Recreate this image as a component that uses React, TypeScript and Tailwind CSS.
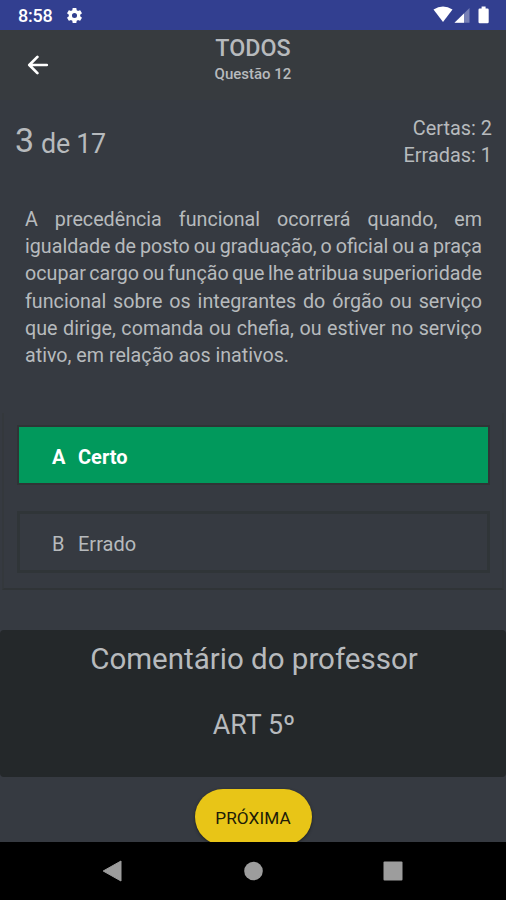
import type { ReactNode } from "react";

const QUESTION_LINES = [
  { text: "A precedência funcional ocorrerá quando, em", spacing: "" },
  { text: "igualdade de posto ou graduação, o oficial ou a praça", spacing: "[word-spacing:-1.2px]" },
  { text: "ocupar cargo ou função que lhe atribua superioridade", spacing: "[word-spacing:-1.7px]" },
  { text: "funcional sobre os integrantes do órgão ou serviço", spacing: "" },
  { text: "que dirige, comanda ou chefia, ou estiver no serviço", spacing: "" },
];

function StatusBar() {
  return (
    <div className="flex h-[30px] shrink-0 items-center justify-between bg-[#323f90] pl-[18px] pr-[15px] text-white">
      <div className="flex items-center gap-[11px]">
        <span className="w-[36px] whitespace-nowrap text-[18px] font-medium leading-[30px] tracking-[-0.2px] pt-[2px]">8:58</span>
        <svg width="19" height="19" viewBox="0 0 24 24" fill="currentColor">
          <path d="M19.14 12.94c.04-.3.06-.61.06-.94 0-.32-.02-.64-.07-.94l2.03-1.58a.49.49 0 0 0 .12-.61l-1.92-3.32a.488.488 0 0 0-.59-.22l-2.39.96c-.5-.38-1.03-.7-1.62-.94l-.36-2.54a.484.484 0 0 0-.48-.41h-3.84c-.24 0-.43.17-.47.41l-.36 2.54c-.59.24-1.13.57-1.62.94l-2.39-.96c-.22-.08-.47 0-.59.22L2.74 8.87c-.12.21-.08.47.12.61l2.03 1.58c-.05.3-.09.63-.09.94s.02.64.07.94l-2.03 1.58a.49.49 0 0 0-.12.61l1.92 3.32c.12.22.37.29.59.22l2.39-.96c.5.38 1.03.7 1.62.94l.36 2.54c.05.24.24.41.48.41h3.84c.24 0 .44-.17.47-.41l.36-2.54c.59-.24 1.13-.56 1.62-.94l2.39.96c.22.08.47 0 .59-.22l1.92-3.32c.12-.22.07-.47-.12-.61l-2.01-1.58zM12 15.2A3.2 3.2 0 1 1 12 8.8a3.2 3.2 0 0 1 0 6.4z" />
        </svg>
      </div>
      <svg width="58" height="30" viewBox="0 0 58 30">
        <path d="M0.5 9.5Q10 3.5 19.5 9.5L10 22Z" fill="#fff" />
        <path d="M21.5 22.8L36.5 8V22.8Z" fill="#7780b5" />
        <path d="M21.5 22.8L31 13.4V22.8Z" fill="#fff" />
        <path d="M48.6 6.5h4v2h1.9q1.2 0 1.2 1.2V22q0 1.2-1.2 1.2h-7.8q-1.2 0-1.2-1.2V9.7q0-1.2 1.2-1.2h1.9z" fill="#fff" />
      </svg>
    </div>
  );
}

function Header() {
  return (
    <header className="grid h-[70px] shrink-0 grid-cols-[100px_1fr_100px] bg-[#373b3f]">
      <button className="flex items-center pl-[27px] pb-[1px] text-white" aria-label="Voltar">
        <svg width="22" height="20" viewBox="0 0 22 20" fill="none" stroke="currentColor" strokeWidth="2.7" strokeLinecap="round" strokeLinejoin="round">
          <path d="M19.8 10H2.5M10.4 1.9L2.3 10l8.1 8.1" />
        </svg>
      </button>
      <div className="flex flex-col items-center">
        <h1 className="mt-[4px] text-[23.3px] font-medium leading-[28px]">TODOS</h1>
        <p className="mt-[2px] text-[15px] font-medium leading-[21px]">Questão 12</p>
      </div>
    </header>
  );
}

function Answer({ letter, correct = false, children }: { letter: string; correct?: boolean; children: ReactNode }) {
  return (
    <div
      className={
        correct
          ? "flex h-[60px] items-center gap-[12px] border-2 border-[#303436] bg-[#01995c] pl-[33px] pt-[3px] text-[20px] font-bold text-white"
          : "flex h-[62px] items-center gap-[12px] border-[3px] border-[#303538] pl-[32px] pt-[3px] text-[20px]"
      }
    >
      <span className="w-[14px]">{letter}</span>
      <span>{children}</span>
    </div>
  );
}

export default function App() {
  return (
    <div className="flex h-[900px] w-[506px] flex-col overflow-hidden bg-[#363a41] font-['Roboto',sans-serif] text-[#b7babd]">
      <StatusBar />
      <Header />
      <main className="flex h-[742px] flex-col overflow-hidden">
        <section className="flex h-[98px] shrink-0 justify-between pl-[15px] pr-[14px]">
          <div className="flex items-baseline pt-[20px]">
            <span className="text-[34px] leading-[40px]">3</span>
            <span className="relative top-[1px] ml-[7px] text-[26.8px] tracking-[-0.3px]">de 17</span>
          </div>
          <div className="pt-[15px] text-right text-[19.9px] leading-[27px]">
            <p>Certas: 2</p>
            <p>Erradas: 1</p>
          </div>
        </section>

        <section className="h-[215px] shrink-0 pl-[25px] pr-[24px] pt-[8px] text-[19.7px] leading-[27.2px]">
          {QUESTION_LINES.map(({ text, spacing }) => (
            <p key={text} className={`whitespace-nowrap [text-align-last:justify] ${spacing}`}>{text}</p>
          ))}
          <p>ativo, em relação aos inativos.</p>
        </section>

        <section className="mx-[2px] flex h-[177px] shrink-0 flex-col gap-[26px] border-x-2 border-b-2 border-[#34383c] border-b-[#303437] pl-[13px] pr-[12px] pt-[12px]">
          <Answer letter="A" correct>Certo</Answer>
          <Answer letter="B">Errado</Answer>
        </section>

        <section className="mt-[40px] flex h-[147px] shrink-0 flex-col items-center rounded-[4px] bg-[#24282a]">
          <h2 className="ml-[2px] mt-[10px] text-[29.5px] leading-[38px]">Comentário do professor</h2>
          <p className="ml-[2px] mt-[30px] text-[26.8px] leading-[34px]">ART 5º</p>
        </section>

        <button className="mt-[12px] flex h-[56px] w-[117px] shrink-0 items-center justify-center self-center rounded-full bg-[#e8c517] pt-[3px] text-[17.2px] tracking-[0.1px] text-[#201c08] shadow-[0_1px_3px_#1d2022]">
          PRÓXIMA
        </button>
      </main>
      <nav className="flex h-[58px] shrink-0 justify-between bg-black pl-[102px] pr-[103px] pt-[18px] text-[#9d9d9d]">
        <svg width="20" height="22" viewBox="0 0 20 22"><path d="M1.2 11L19 1v20z" fill="currentColor" stroke="currentColor" strokeLinejoin="round" /></svg>
        <svg width="20" height="22" viewBox="0 0 20 22"><circle cx="10.5" cy="11" r="9.3" fill="currentColor" /></svg>
        <svg width="20" height="22" viewBox="0 0 20 22"><rect x=".5" y="1.5" width="19" height="19" rx="1" fill="currentColor" /></svg>
      </nav>
    </div>
  );
}
